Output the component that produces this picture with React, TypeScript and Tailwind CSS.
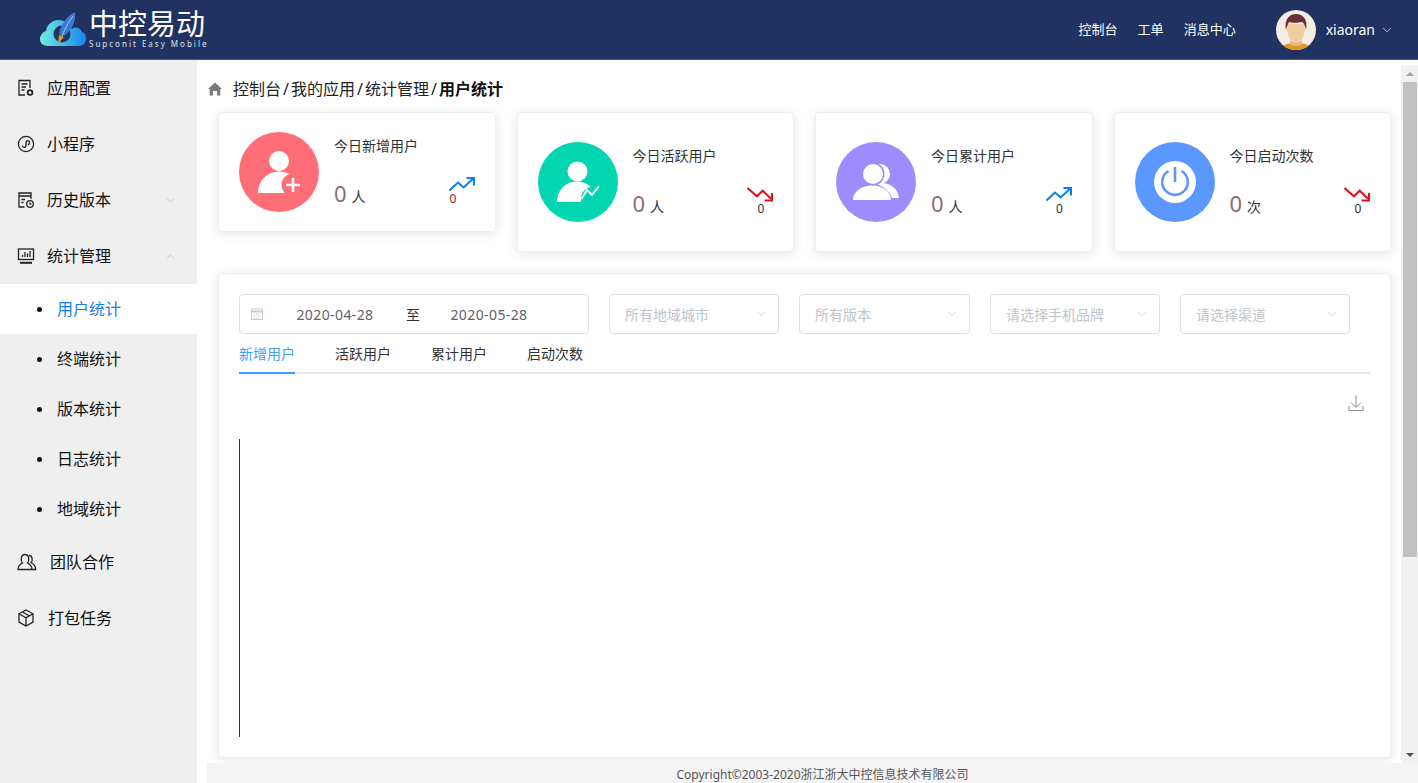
import { ChevronDown, ChevronUp } from 'lucide-react';
import type { ReactNode } from 'react';

const font = { fontFamily: '"Noto Sans", "Noto Sans CJK SC", sans-serif' };

function Logo() {
  return (
    <svg width="48" height="36" viewBox="0 0 48 36" className="shrink-0">
      <defs>
        <linearGradient id="cloud" x1="0" x2="1" y1="0" y2="0">
          <stop offset="0" stopColor="#71ebe0" />
          <stop offset="1" stopColor="#1a83ee" />
        </linearGradient>
      </defs>
      <path d="M8 34 C2 34 0 30 0 27 C0 23 3 20 6 19 C7 12 13 8 18 8 C25 8 30 12 32 17 C35 14 41 16 42 20 C45 21 46 24 46 27 C46 31 43 34 39 34 Z" fill="url(#cloud)" />
      <circle cx="22" cy="22" r="8.5" fill="#1f3560" />
      <path d="M35 0 C36 8 33 17 24 24 L19 22 C21 12 27 4 35 0 Z" fill="#3b78d8" />
      <path d="M33 4 C30 8 26 14 22 24" stroke="#a9c8f2" strokeWidth="1" fill="none" />
      <path d="M19 23 L24 25 L18 32 Z" fill="#d99a2b" />
    </svg>
  );
}

function Avatar() {
  return (
    <svg width="40" height="40" viewBox="0 0 40 40" className="shrink-0">
      <defs>
        <clipPath id="avatar-clip">
          <circle cx="20" cy="20" r="20" />
        </clipPath>
      </defs>
      <g clipPath="url(#avatar-clip)">
        <rect width="40" height="40" fill="#f4ede4" />
        <path d="M4 40 C6 34 13 33 20 33 C27 33 34 34 36 40 Z" fill="#e09a1f" />
        <path d="M14 34 C16 37 24 37 26 34 L25 27 L15 27 Z" fill="#dfb88c" />
        <path d="M11 14 C11 28 15 33 20 33 C25 33 29 28 29 14 Z" fill="#f0cda0" />
        <path d="M10 20 C8 10 13 4 20 4 C27 4 32 9 30 20 C29 15 28 13 26 12 C22 13 16 13 13 12 C12 14 11 16 10 20 Z" fill="#6d2b35" />
      </g>
    </svg>
  );
}

function IconBase({ children }: { children: ReactNode }) {
  return (
    <svg width="18" height="18" viewBox="0 0 18 18" fill="none" stroke="#222" strokeWidth="1.3" className="shrink-0">
      {children}
    </svg>
  );
}

const ConfigIcon = () => (
  <IconBase>
    <path d="M8 16 H2 V1.5 H13 V9" />
    <path d="M4.5 5 H10.5 M4.5 8 H9 M4.5 11 H7.5" />
    <circle cx="13" cy="13.5" r="2.4" strokeWidth="1.8" />
  </IconBase>
);
const MiniIcon = () => (
  <IconBase>
    <circle cx="9" cy="9" r="7.6" />
    <path d="M5.5 10.5 C5.5 13 9 13 9 10 V8 C9 5 12.5 5 12.5 7.5 C12.5 9 11.5 9.6 10.8 9.8" />
  </IconBase>
);
const HistoryIcon = () => (
  <IconBase>
    <path d="M7.5 16 H2 V2 H14 V8" />
    <path d="M2 5 H14 M4.5 8.5 H8 M4.5 11.5 H6.5" />
    <circle cx="13" cy="13" r="3.3" />
    <path d="M13 11.4 V13.2 H14.5" />
  </IconBase>
);
const StatIcon = () => (
  <IconBase>
    <rect x="1.5" y="2" width="15" height="10.5" />
    <path d="M5.5 10 V8 M8 10 V5 M10.5 10 V6.5 M13 10 V4" />
    <path d="M3 15.8 H15" strokeWidth="2" />
  </IconBase>
);
const TeamIcon = () => (
  <svg width="20" height="18" viewBox="0 0 20 18" fill="none" stroke="#222" strokeWidth="1.3" className="shrink-0">
    <path d="M1 16.5 C1 12.5 3.5 11 5.5 10 C3.5 8 3.5 1.5 8 1.5 C12.5 1.5 12.5 8 10.5 10 C12.5 11 15 12.5 15 16.5 Z" />
    <path d="M12 2.5 C15.5 2.5 16 7.5 14 9.5 C16 10.5 18.7 12 18.7 16.5 H15.5" />
  </svg>
);
const BoxIcon = () => (
  <IconBase>
    <path d="M9 1 L16 4.8 V13 L9 17 L2 13 V4.8 Z" />
    <path d="M2 4.8 L9 8.8 L16 4.8 M9 8.8 V17 M5.5 3 L12.5 7" />
  </IconBase>
);

function TopItem({ icon, label, gap, arrow }: { icon: ReactNode; label: string; gap: string; arrow?: 'up' | 'down' }) {
  return (
    <div className="h-[56px] flex items-center pl-[17px] pr-[20px] text-[16px] text-[#111]">
      {icon}
      <span className={`flex-1 ${gap}`}>{label}</span>
      {arrow === 'down' && <ChevronDown size={13} strokeWidth={1} color="#a9a9a9" />}
      {arrow === 'up' && <ChevronUp size={13} strokeWidth={1} color="#a9a9a9" />}
    </div>
  );
}

function SubItem({ label, active }: { label: string; active?: boolean }) {
  return (
    <div className={`h-[50px] flex items-center pl-[37px] text-[16px] ${active ? 'bg-white text-[#1a7af8]' : 'text-[#111]'}`}>
      <span className="w-[5px] h-[5px] rounded-full bg-[#111] mr-[15px]" />
      {label}
    </div>
  );
}

function Sidebar() {
  return (
    <aside className="w-[197px] shrink-0 bg-[#efefef]">
      <TopItem icon={<ConfigIcon />} label="应用配置" gap="ml-[12px]" />
      <TopItem icon={<MiniIcon />} label="小程序" gap="ml-[12px]" />
      <TopItem icon={<HistoryIcon />} label="历史版本" gap="ml-[12px]" arrow="down" />
      <TopItem icon={<StatIcon />} label="统计管理" gap="ml-[12px]" arrow="up" />
      <SubItem label="用户统计" active />
      <SubItem label="终端统计" />
      <SubItem label="版本统计" />
      <SubItem label="日志统计" />
      <SubItem label="地域统计" />
      <TopItem icon={<TeamIcon />} label="团队合作" gap="ml-[13px]" />
      <TopItem icon={<BoxIcon />} label="打包任务" gap="ml-[13px]" />
    </aside>
  );
}

const AddUser = () => (
  <svg width="80" height="80" viewBox="0 0 80 80" className="shrink-0">
    <circle cx="40" cy="40" r="40" fill="#ff6e76" />
    <circle cx="40" cy="29" r="10" fill="#fff" />
    <path d="M19 61 C19 48 29 39.5 40 39.5 C51 39.5 61 48 61 61 Z" fill="#fff" />
    <circle cx="54" cy="53" r="11.5" fill="#ff6e76" />
    <path d="M54 46 V60 M47 53 H61" stroke="#fff" strokeWidth="2.6" />
    <rect x="50" y="61" width="12" height="3" fill="#ff6e76" />
  </svg>
);
const ActiveUser = () => (
  <svg width="80" height="80" viewBox="0 0 80 80" className="shrink-0">
    <circle cx="40" cy="40" r="40" fill="#02d6b0" />
    <circle cx="39.5" cy="29.5" r="10" fill="#fff" />
    <path d="M19 60 C19 48 28 39.5 39 39.5 C45 39.5 50 42 53 45 C47 46 42 51 43 60 Z" fill="#fff" />
    <path d="M42 58 C42 52 45 48 50 46" stroke="#fff" strokeWidth="0" fill="none" />
    <path d="M43.5 57 L49 48 L54 53 L61 44" stroke="#fff" strokeWidth="2" fill="none" />
  </svg>
);
const AllUser = () => (
  <svg width="80" height="80" viewBox="0 0 80 80" className="shrink-0">
    <circle cx="40" cy="40" r="40" fill="#9e8cfd" />
    <circle cx="44" cy="32" r="10" fill="#fff" />
    <path d="M28 56 C28 46 36 41 45 41 C55 41 62 47 63 56 L56 56 C54 49 46 43 28 56 Z" fill="#fff" />
    <circle cx="37" cy="32" r="11.5" fill="#9e8cfd" />
    <circle cx="37" cy="32" r="10" fill="#fff" />
    <path d="M15 60 L17 58 C17 49 26 42 36 42 C46 42 55 49 55 58 Z" fill="#9e8cfd" />
    <path d="M17 58 C17 49 26 43.5 36 43.5 C46 43.5 55 49 55 58 Z" fill="#fff" />
  </svg>
);
const Power = () => (
  <svg width="80" height="80" viewBox="0 0 80 80" className="shrink-0">
    <circle cx="40" cy="40" r="40" fill="#5a98ff" />
    <circle cx="40" cy="40" r="21" fill="#fff" />
    <path d="M46.5 29 A12.8 12.8 0 1 1 33.5 29" fill="none" stroke="#5a98ff" strokeWidth="2.6" />
    <path d="M40 25 V40" stroke="#5a98ff" strokeWidth="2.6" />
  </svg>
);

function Trend({ up }: { up: boolean }) {
  if (up) {
    return (
      <svg width="26" height="15" viewBox="0 0 26 15" fill="none" stroke="#0a7ff5" strokeWidth="2" className="block">
        <path d="M0.5 13.5 L9 5.5 L14.7 10.5 L24 1.8" />
        <path d="M17.5 1 H25 V8.5" />
      </svg>
    );
  }
  return (
    <svg width="26" height="15" viewBox="0 0 26 15" fill="none" stroke="#e60f1e" strokeWidth="2" className="block">
      <path d="M0.5 1 L10 9.3 L15.7 3.7 L24 11.8" />
      <path d="M25 6 V13.5 H17.5" />
    </svg>
  );
}

function StatCard(props: { icon: ReactNode; title: string; unit: string; up: boolean; tall: boolean; first?: boolean }) {
  return (
    <div className={`bg-white rounded-[4px] border border-[#ebeef5] shadow-[0_2px_12px_0_rgba(0,0,0,0.1)] flex pl-[20px] pr-[20px] ${props.tall ? 'py-[29px]' : 'py-[19px]'}`}>
      {props.icon}
      <div className="flex-1 ml-[15px] pt-[4px]">
        <div className="text-[14px] leading-[20px] text-[#303133]">{props.title}</div>
        <div className="flex justify-between mt-[21px]">
          <div className="flex items-baseline h-[30px] pt-[3px]">
            <span className="text-[22px] leading-[26px] text-[#8d6c72]">0</span>
            <span className="text-[14px] leading-[20px] text-[#303133] ml-[5px]">{props.unit}</span>
          </div>
          <div className="w-[26px]">
            <Trend up={props.up} />
            <div className={`text-[12px] leading-[14px] ${props.first ? 'text-[#8a1c36] pl-[1px]' : 'text-[#303133] text-center pl-[2px]'}`}>0</div>
          </div>
        </div>
      </div>
    </div>
  );
}

function Select({ label, w }: { label: string; w: string }) {
  return (
    <div className={`${w} h-[40px] border border-[#dcdfe6] rounded-[4px] flex items-center justify-between pl-[15px] pr-[10px] text-[14px] text-[#c0c4cc]`}>
      <span>{label}</span>
      <ChevronDown size={14} strokeWidth={1} color="#b4bccc" />
    </div>
  );
}

function Filters() {
  return (
    <div className="flex gap-[20px]">
      <div className="w-[350px] h-[40px] border border-[#dcdfe6] rounded-[4px] flex items-center pl-[10px] text-[14px] text-[#606266]">
        <svg width="14" height="14" viewBox="0 0 14 14" fill="none" stroke="#c8ccd6" strokeWidth="1" className="shrink-0">
          <rect x="1.5" y="2" width="11" height="10.5" />
          <path d="M1.5 4.5 H12.5" strokeWidth="2" />
          <path d="M3.5 7 H10.5 M3.5 9 H10.5 M3.5 11 H10.5" strokeDasharray="1.4 1" />
        </svg>
        <span className="w-[142px] text-center tracking-[0.4px]">2020-04-28</span>
        <span className="w-[14px] text-center text-[#303133]">至</span>
        <span className="w-[138px] text-center tracking-[0.4px]">2020-05-28</span>
      </div>
      <Select label="所有地域城市" w="w-[170px]" />
      <Select label="所有版本" w="w-[171px]" />
      <Select label="请选择手机品牌" w="w-[170px]" />
      <Select label="请选择渠道" w="w-[170px]" />
    </div>
  );
}

function Tabs() {
  const tabs = ['新增用户', '活跃用户', '累计用户', '启动次数'];
  return (
    <div className="flex gap-[40px] border-b-2 border-[#e4e7ed] mt-[10px] h-[30px]">
      {tabs.map((t, i) => (
        <div
          key={t}
          className={`text-[14px] leading-[20px] h-[30px] ${i === 0 ? 'text-[#409eff] border-b-2 border-[#409eff]' : 'text-[#303133]'}`}
        >
          {t}
        </div>
      ))}
    </div>
  );
}

function Scrollbar() {
  return (
    <div className="w-[17px] shrink-0 bg-[#f1f1f1] flex flex-col items-center">
      <div className="h-[17px] flex items-center justify-center">
        <div className="border-x-[4px] border-x-transparent border-b-[4px] border-b-[#a3a3a3]" />
      </div>
      <div className="w-[14px] h-[475px] bg-[#c1c1c1]" />
      <div className="flex-1" />
      <div className="h-[17px] flex items-center justify-center">
        <div className="border-x-[4px] border-x-transparent border-t-[4px] border-t-[#505050]" />
      </div>
    </div>
  );
}

export default function App() {
  return (
    <div className="w-[1418px] h-[783px] overflow-hidden flex flex-col bg-white" style={font}>
      <header className="h-[60px] shrink-0 bg-[#203260] border-b border-[#4a5a82] flex items-center pl-[40px] pr-[24px] text-white">
        <Logo />
        <div className="ml-[1px] -mt-[2px]">
          <div className="text-[29px] leading-[30px]">中控易动</div>
          <div className="text-[8px] leading-[9px] tracking-[2px] text-[#dfe5f0]">Supconit Easy Mobile</div>
        </div>
        <div className="flex-1" />
        <div className="flex gap-[20px] text-[13px]">
          <span>控制台</span>
          <span>工单</span>
          <span>消息中心</span>
        </div>
        <div className="ml-[40px]">
          <Avatar />
        </div>
        <span className="ml-[10px] text-[14px]">xiaoran</span>
        <ChevronDown size={14} strokeWidth={1.2} className="ml-[5px]" />
      </header>

      <div className="flex-1 flex min-h-0">
        <Sidebar />
        <div className="flex-1 flex flex-col min-w-0 pl-[10px]">
          <div className="flex-1 flex min-h-0 pt-[5px]">
            <main className="flex-1 min-w-0 overflow-hidden pl-[1px] pr-[10px]">
              <div className="flex items-center h-[24px] mt-[12px] text-[16px] leading-[24px] text-[#222]">
                <svg width="14" height="14" viewBox="0 0 14 14" fill="#7a7a7a" className="shrink-0">
                  <path d="M7 0.5 L14 7 L12.3 7 V13.5 H9 V9 H5 V13.5 H1.7 V7 L0 7 Z" />
                </svg>
                <span className="ml-[11px]">控制台</span>
                <span className="mx-[2px]">/</span>
                <span>我的应用</span>
                <span className="mx-[2px]">/</span>
                <span>统计管理</span>
                <span className="mx-[2px]">/</span>
                <span className="font-bold text-[#111]">用户统计</span>
              </div>

              <div className="ml-[10px] mt-[11px] grid grid-cols-4 gap-[21px] items-start">
                <StatCard icon={<AddUser />} title="今日新增用户" unit="人" up tall={false} first />
                <StatCard icon={<ActiveUser />} title="今日活跃用户" unit="人" up={false} tall />
                <StatCard icon={<AllUser />} title="今日累计用户" unit="人" up tall />
                <StatCard icon={<Power />} title="今日启动次数" unit="次" up={false} tall />
              </div>

              <section className="ml-[10px] mt-[21px] h-[485px] bg-white rounded-[4px] border border-[#ebeef5] shadow-[0_2px_12px_0_rgba(0,0,0,0.1)] p-[20px]">
                <Filters />
                <Tabs />
                <div className="flex justify-end mt-[21px] pr-[6px]">
                  <svg width="16" height="16" viewBox="0 0 16 16" fill="none" stroke="#8c8c8c" strokeWidth="1">
                    <path d="M8 0.5 V12 M3 7.5 L8 12.5 L13 7.5 M1 11 V15.5 H15 V11" />
                  </svg>
                </div>
                <div className="w-px h-[298px] bg-[#333] mt-[28px]" />
              </section>
            </main>
            <Scrollbar />
          </div>
          <footer className="h-[20px] shrink-0 bg-[#f4f4f4] text-center text-[12px] leading-[24px] text-[#555] pl-[20px]">
            Copyright©2003-2020浙江浙大中控信息技术有限公司
          </footer>
        </div>
      </div>
    </div>
  );
}
